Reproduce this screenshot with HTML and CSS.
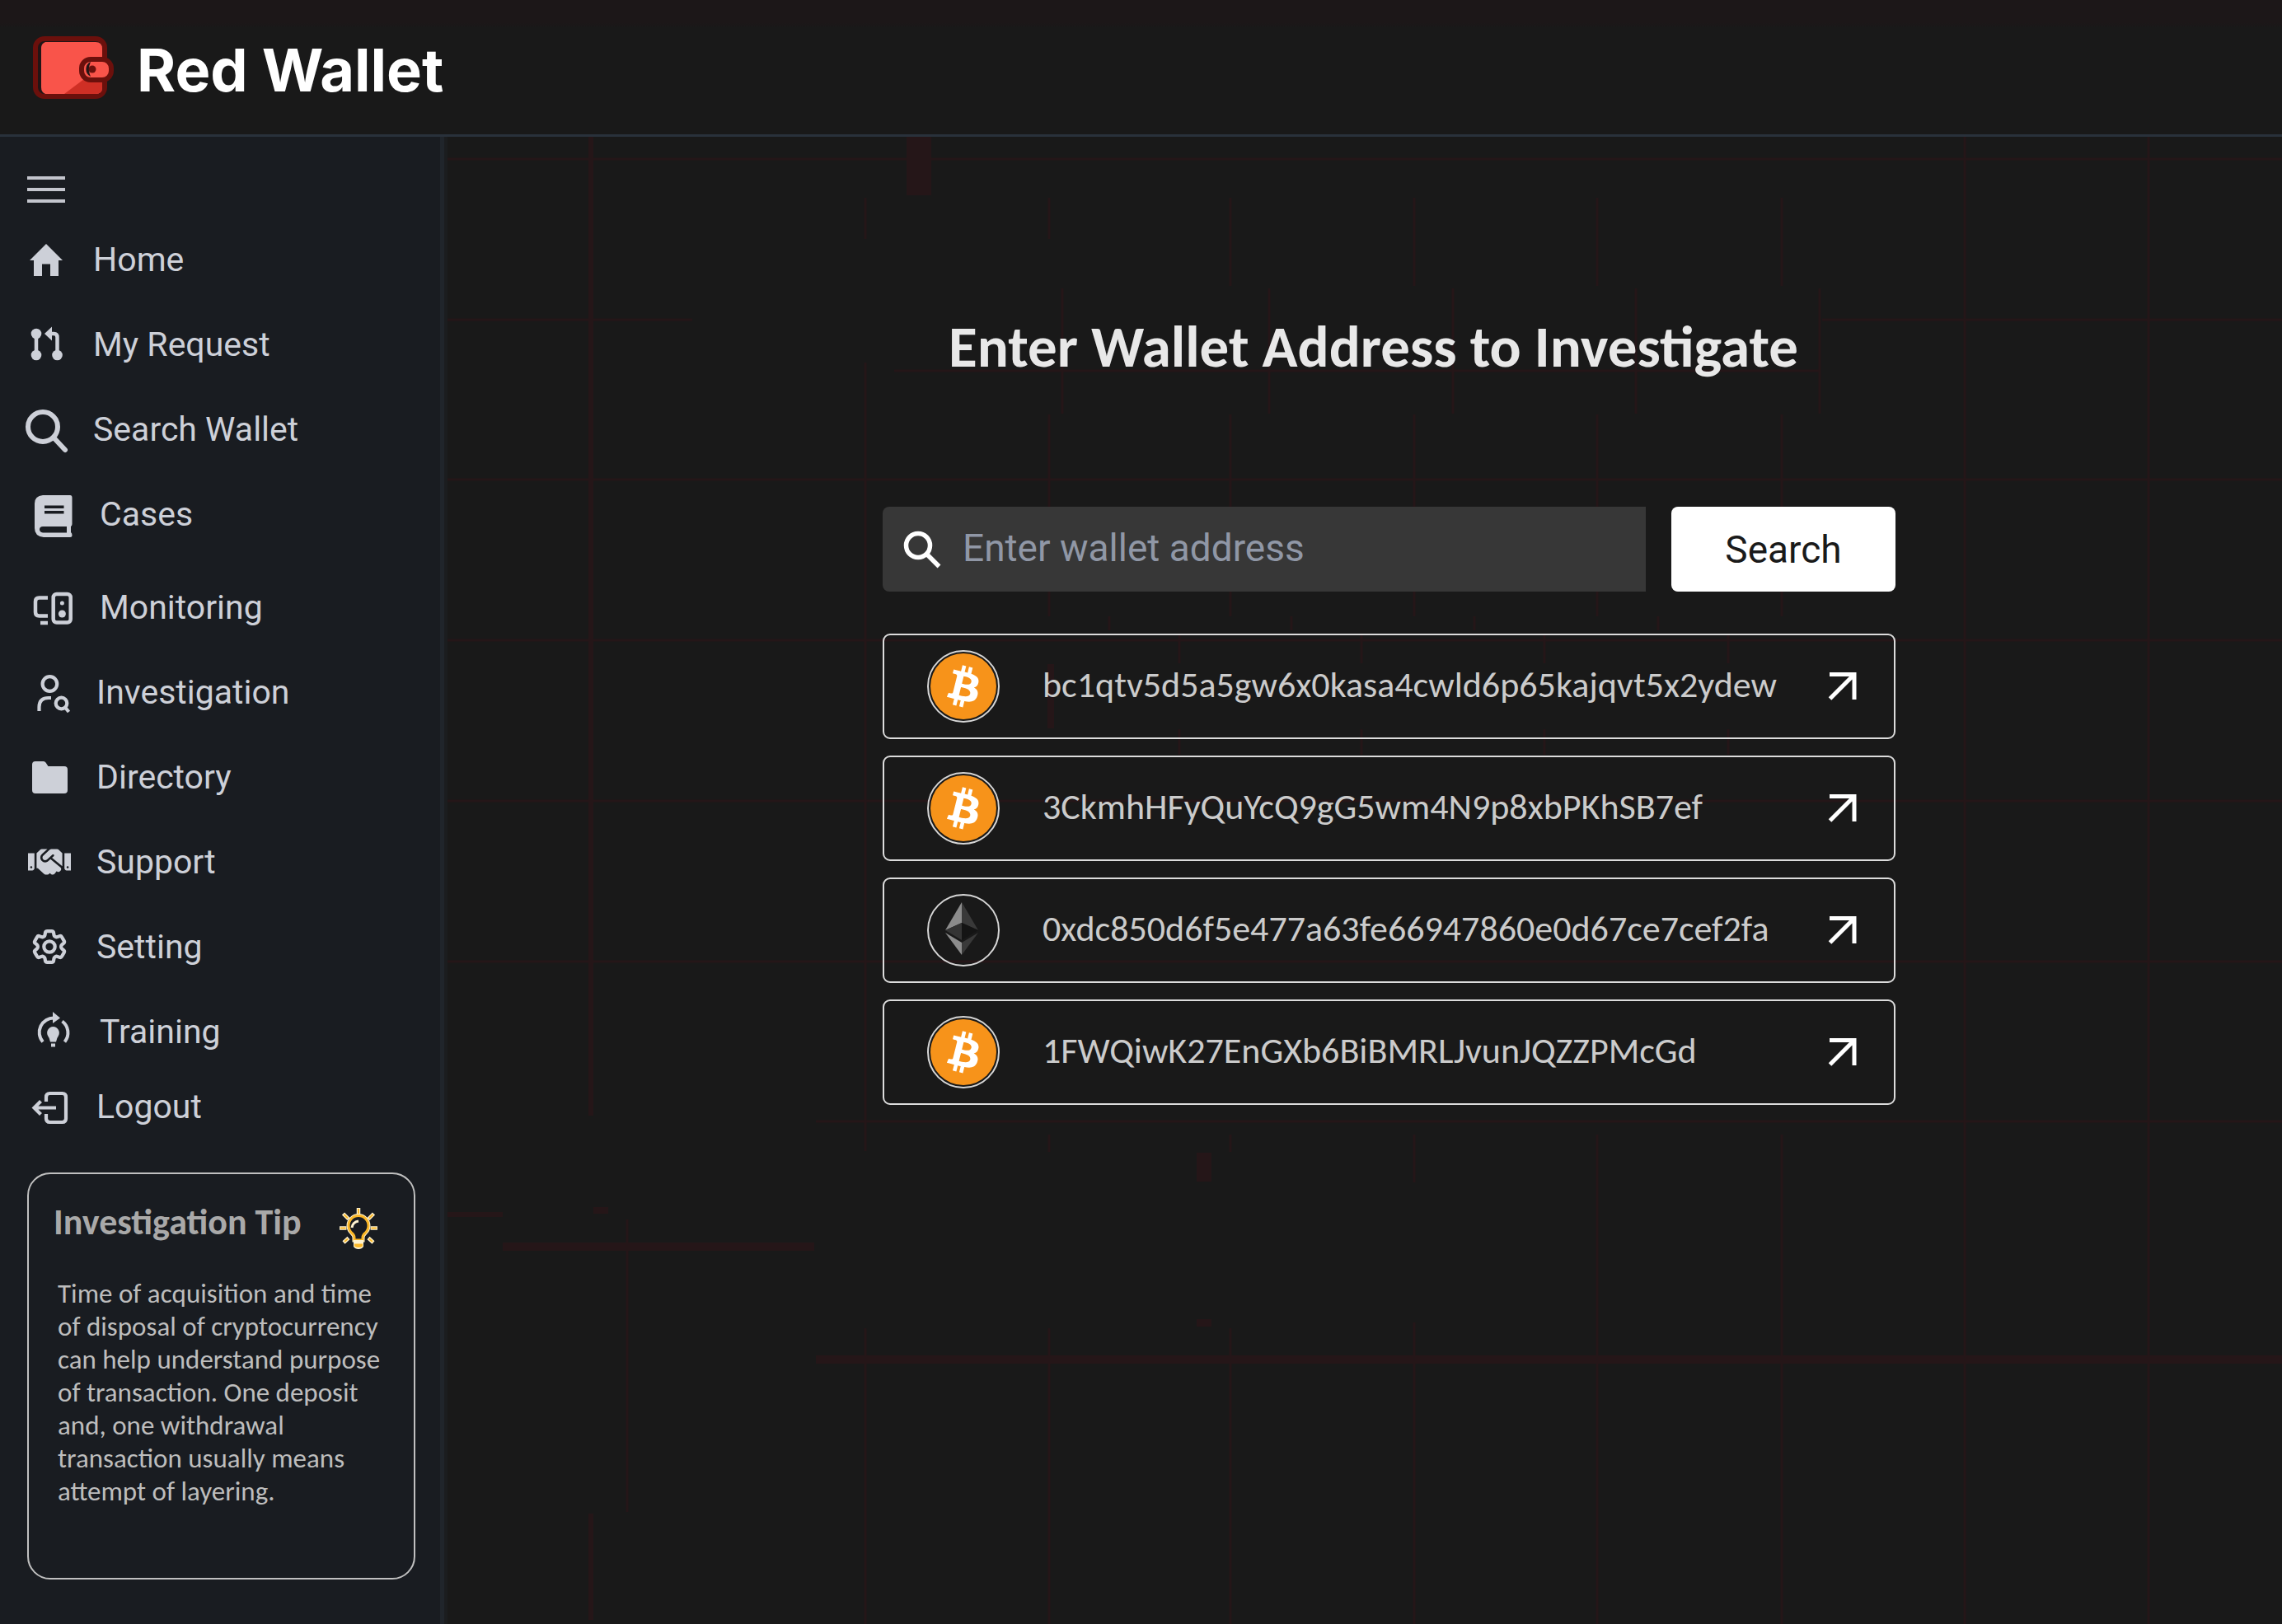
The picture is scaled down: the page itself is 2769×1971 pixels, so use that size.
FILE: index.html
```html
<!DOCTYPE html>
<html lang="en">
<head>
<meta charset="utf-8">
<title>Red Wallet</title>
<meta name="viewport" content="width=device-width, initial-scale=1">
<link rel="stylesheet" href="styles.css">
</head>
<body>
<svg width="0" height="0" class="sprite" aria-hidden="true">
  <symbol id="bitcoin" viewBox="0 0 88 88">
    <circle cx="44" cy="44" r="43" fill="none" stroke="#d6d6d6" stroke-width="2"/>
    <circle cx="44" cy="44" r="40" fill="#f7931a"/>
    <path transform="translate(3 3) scale(2.560)" fill="#fff" d="M23.189 14.020c.314-2.096-1.283-3.223-3.465-3.975l.708-2.840-1.728-.43-.69 2.765c-.454-.114-.92-.22-1.385-.326l.695-2.783L15.596 6l-.708 2.839c-.376-.086-.746-.17-1.104-.26l.002-.009-2.384-.595-.46 1.846s1.283.294 1.256.312c.7.175.826.638.805 1.006l-.806 3.235c.048.012.11.03.18.057l-.183-.045-1.130 4.532c-.086.212-.303.531-.793.41.018.025-1.256-.313-1.256-.313l-.858 1.978 2.250.561c.418.105.828.215 1.231.318l-.715 2.872 1.727.43.708-2.840c.472.127.93.245 1.378.357l-.706 2.828 1.728.43.715-2.866c2.948.558 5.164.333 6.097-2.333.752-2.146-.037-3.385-1.588-4.192 1.130-.26 1.980-1.003 2.207-2.538zm-3.950 5.538c-.533 2.147-4.148.986-5.320.695l.95-3.805c1.172.293 4.929.872 4.370 3.110zm.535-5.569c-.487 1.953-3.495.96-4.470.717l.86-3.450c.975.243 4.118.696 3.610 2.733z"/>
  </symbol>
  <symbol id="ethereum" viewBox="0 0 88 88">
    <circle cx="44" cy="44" r="43" fill="none" stroke="#d6d6d6" stroke-width="2"/>
    <path d="M42 10 22 44 42 35Z" fill="#8c8c8c"/>
    <path d="M42 10 62 44 42 35Z" fill="#393939"/>
    <path d="M22 44 42 35V56Z" fill="#343434"/>
    <path d="M62 44 42 35V56Z" fill="#141414"/>
    <path d="M22 47 42 59V74Z" fill="#8c8c8c"/>
    <path d="M62 47 42 59V74Z" fill="#393939"/>
  </symbol>
  <symbol id="arrow" viewBox="0 0 36 36">
    <path d="M2 3.500H32V34M31 4.500 2.500 33" fill="none" stroke="#fff" stroke-width="5"/>
  </symbol>
</svg>

<header class="topbar">
  <svg class="logo" viewBox="0 0 98 76" aria-hidden="true">
    <rect x="3" y="3" width="84" height="70" rx="11" fill="#211516" stroke="#6b100c" stroke-width="6"/>
    <path d="M15 7H76q8 0 8 8V62q0 8-8 8H15q-5-2-5-8V14q0-5 5-7Z" fill="#f9544a"/>
    <path d="M84 52V62q0 8-8 8H38L62 52Z" fill="#cf2f25"/>
    <rect x="59" y="28" width="36" height="25" rx="11" fill="#f9544a" stroke="#6b100c" stroke-width="6"/>
    <path d="M70 31a10 10 0 0 0 0 18q-4-9 0-18Z" fill="#211516"/>
    <circle cx="72" cy="40" r="4.500" fill="#6b100c"/>
  </svg>
  <span class="brand">Red Wallet</span>
</header>

<div class="layout">
  <aside class="sidebar">
    <button class="menu-toggle" type="button" aria-label="Toggle menu"><span></span><span></span><span></span></button>

    <nav aria-label="Main">
      <ul class="nav-group">
        <li><a class="nav-link" href="#">
          <svg class="nav-icon" viewBox="0 0 52 52"><path d="M26 7 46 27H41V46H31V31.500H21V46H11V27H6Z" fill="currentColor"/></svg>
          <span>Home</span></a></li>
        <li><a class="nav-link" href="#">
          <svg class="nav-icon" viewBox="0 0 52 52"><g fill="currentColor"><circle cx="14" cy="13" r="6.300"/><circle cx="14" cy="39" r="6.300"/><circle cx="39.500" cy="39" r="6.300"/><path d="M24 13 33 4.500V21.500Z"/></g><path d="M14 13V39M32 13H35.500Q39.500 13 39.500 17.500V39" fill="none" stroke="currentColor" stroke-width="4.500"/></svg>
          <span>My Request</span></a></li>
        <li><a class="nav-link" href="#">
          <svg class="nav-icon" viewBox="0 0 52 52"><g fill="none" stroke="currentColor" stroke-width="6" stroke-linecap="round"><circle cx="22" cy="23" r="18"/><path d="M35 36 49 51"/></g></svg>
          <span>Search Wallet</span></a></li>
        <li><a class="nav-link indent-2" href="#">
          <svg class="nav-icon" viewBox="0 0 52 52"><path fill="currentColor" fill-rule="evenodd" d="M14 3H47Q49.500 3 49.500 6V38Q49.500 40 48 41V48Q49.500 49 49.500 51.500T47 54H15Q4 53 4 43V13Q4 4 14 3ZM16 15.500V19H39.500V15.500ZM16 22V25.500H39.500V22ZM14 41Q10 41 10 44.500T14 48.500H43V41Z"/></svg>
          <span>Cases</span></a></li>
      </ul>
      <ul class="nav-group">
        <li><a class="nav-link indent-2" href="#">
          <svg class="nav-icon" viewBox="0 0 52 52"><path d="M20 14.500H9.500Q5 14.500 5 19V32Q5 36.500 9.500 36.500H20M11 45H20" fill="none" stroke="currentColor" stroke-width="4.500"/><rect x="26.700" y="10" width="21" height="34.500" rx="4" fill="none" stroke="currentColor" stroke-width="4.500"/><circle cx="37.400" cy="21" r="2.500" fill="currentColor"/><circle cx="37.400" cy="34" r="4.500" fill="currentColor"/></svg>
          <span>Monitoring</span></a></li>
        <li><a class="nav-link indent-1" href="#">
          <svg class="nav-icon" viewBox="0 0 52 52"><g fill="none" stroke="currentColor" stroke-width="4.200"><circle cx="26.400" cy="16" r="8.800"/><path d="M13.500 49V44Q13.500 33 25 33H28"/><circle cx="40.500" cy="39.500" r="6.800"/><path d="M45 44.500 49.500 50"/></g></svg>
          <span>Investigation</span></a></li>
        <li><a class="nav-link indent-1" href="#">
          <svg class="nav-icon" viewBox="0 0 52 52"><path fill="currentColor" d="M9 7H19Q20.500 7 21.500 8.500L24.500 13H44Q48 13 48 17V42Q48 46 44 46H9Q5 46 5 42V11Q5 7 9 7Z"/></svg>
          <span>Directory</span></a></li>
        <li><a class="nav-link indent-1" href="#">
          <svg class="nav-icon" viewBox="0 0 640 512"><path fill="currentColor" d="M434.700 64h-85.900c-8 0-15.700 3-21.600 8.400l-98.300 90c-.1.1-.2.3-.3.4-16.600 15.600-16.300 40.500-2.100 56 12.700 13.900 39.400 17.600 56.100 2.700.1-.1.3-.1.4-.2l79.900-73.200c6.500-5.900 16.700-5.500 22.600 1 6 6.500 5.500 16.600-1 22.600l-26.100 23.900L504 313.800c2.900 2.400 5.500 5 7.900 7.700V128l-54.600-54.600c-5.900-6-14.100-9.400-22.600-9.400zM544 128.200v223.900c0 17.700 14.300 32 32 32h64V128.200h-96zm48 223.900c-8.800 0-16-7.200-16-16s7.200-16 16-16 16 7.200 16 16-7.200 16-16 16zM0 384h64c17.700 0 32-14.300 32-32V128.200H0V384zm48-63.900c8.800 0 16 7.200 16 16s-7.200 16-16 16-16-7.200-16-16c0-8.900 7.200-16 16-16zm435.900 18.600L334.600 217.500l-30 27.500c-29.700 27.100-75.200 24.500-101.700-4.400-26.900-29.400-24.800-74.900 4.400-101.700L289.100 64h-83.800c-8.500 0-16.600 3.400-22.600 9.400L128 128v223.900h18.300l90.500 81.900c27.400 22.300 67.700 18.100 90-9.300l.2-.2 17.900 15.500c15.900 13 39.400 10.500 52.300-5.400l31.400-38.600 5.400 4.400c13.700 11.100 33.900 9.100 45-4.700l9.500-11.700c11.200-13.800 9.100-33.900-4.600-45.100z"/></svg>
          <span>Support</span></a></li>
        <li><a class="nav-link indent-1" href="#">
          <svg class="nav-icon" viewBox="-.4 -.4 24.800 24.800"><g fill="none" stroke="currentColor" stroke-width="2"><path d="M9.594 3.940c.09-.542.56-.94 1.110-.94h2.593c.55 0 1.020.398 1.110.94l.213 1.281c.063.374.313.686.645.87.074.04.147.083.22.127.325.196.72.257 1.075.124l1.217-.456a1.125 1.125 0 0 1 1.370.49l1.296 2.247a1.125 1.125 0 0 1-.26 1.431l-1.003.827c-.293.241-.438.613-.43.992a7.723 7.723 0 0 1 0 .255c-.008.378.137.75.43.991l1.004.827c.424.35.534.955.26 1.430l-1.298 2.247a1.125 1.125 0 0 1-1.369.491l-1.217-.456c-.355-.133-.75-.072-1.076.124a6.470 6.470 0 0 1-.22.128c-.331.183-.581.495-.644.869l-.213 1.281c-.09.543-.56.94-1.110.94h-2.594c-.55 0-1.019-.398-1.110-.94l-.213-1.281c-.062-.374-.312-.686-.644-.87a6.520 6.520 0 0 1-.22-.127c-.325-.196-.72-.257-1.076-.124l-1.217.456a1.125 1.125 0 0 1-1.369-.49l-1.297-2.247a1.125 1.125 0 0 1 .26-1.431l1.004-.827c.292-.24.437-.613.43-.991a6.932 6.932 0 0 1 0-.255c.007-.38-.138-.751-.43-.992l-1.004-.827a1.125 1.125 0 0 1-.26-1.430l1.297-2.247a1.125 1.125 0 0 1 1.370-.491l1.216.456c.356.133.751.072 1.076-.124.072-.044.146-.086.22-.128.332-.183.582-.495.644-.869l.214-1.280Z"/><circle cx="12" cy="12" r="3.200"/></g></svg>
          <span>Setting</span></a></li>
        <li><a class="nav-link indent-2" href="#">
          <svg class="nav-icon" viewBox="0 0 52 52"><path d="M28 9.500A17.500 17.500 0 0 0 14 38.500M37.500 13.500A17.500 17.500 0 0 1 40.500 38.500" fill="none" stroke="currentColor" stroke-width="4"/><g fill="currentColor"><path d="M26 2V16L35 9.500Z"/><path d="M26.500 20a7.500 7.500 0 0 1 6.500 11Q31 33.500 30 38.500H23Q22 33.500 20 31A7.500 7.500 0 0 1 26.500 20Z"/><rect x="24" y="40.500" width="5" height="4"/></g></svg>
          <span>Training</span></a></li>
      </ul>
      <ul class="nav-group compact">
        <li><a class="nav-link indent-1" href="#">
          <svg class="nav-icon" viewBox="0 0 52 52"><path d="M22 20V14.500Q22 10 26.500 10H41.500Q46 10 46 14.500V40.500Q46 45 41.500 45H26.500Q22 45 22 40.500V35M34 27.500H7M15.500 19.500 7.500 27.500 15.500 35.500" fill="none" stroke="currentColor" stroke-width="4.200"/></svg>
          <span>Logout</span></a></li>
      </ul>
    </nav>

    <section class="tip">
      <div class="tip-head">
        <h2>Investigation Tip</h2>
        <svg class="bulb" viewBox="0 0 46 50" aria-hidden="true">
          <g fill="none" stroke="#fff3d0" stroke-width="4.500"><path d="M23 0V8M4.500 7 11 13.500M41.500 7 35 13.500M0 24.500H8.500M46 24.500H37.500M5 42 11 36.500M41 42 35 36.500"/></g>
          <g fill="none" stroke="#fbb829" stroke-width="2"><path d="M23 1V7M5.500 8 10 12.500M40.500 8 36 12.500M1 24.500H7.500M45 24.500H38.500M6 41 10 37.500M40 41 36 37.500"/></g>
          <path d="M18 39V36Q18 33 15 30.500A12 12 0 1 1 31 30.500Q28 33 28 36V39Z" fill="none" stroke="#fff3d0" stroke-width="5"/>
          <path d="M18 39V36Q18 33 15 30.500A12 12 0 1 1 31 30.500Q28 33 28 36V39Z" fill="#191c21" stroke="#fbb829" stroke-width="3"/>
          <path d="M17 39H29V47Q27 50 23 50T17 47Z" fill="#fff3d0"/>
          <path d="M18 43.500H28V46.500Q26 48 23 48T18 46.500Z" fill="#fbb829"/>
          <path d="M15 24q1-7 8-8" fill="none" stroke="#fff3d0" stroke-width="3"/>
        </svg>
      </div>
      <p>Time of acquisition and time of disposal of cryptocurrency can help understand purpose of transaction. One deposit and, one withdrawal transaction usually means attempt of layering.</p>
    </section>
  </aside>

  <main class="main">
    <svg class="grid-lines" aria-hidden="true">
      <g transform="translate(-539 -166)" fill="none" stroke="#251618" stroke-width="3">
        <path d="M543 193H2769M543 388H840M2211 388H2769M1085 450H2208M543 582H2769M543 777H2769M543 972H2769M543 1167H2769M990 1361H2769"/>
        <path d="M1050 240V290M1050 440V1397M1050 1612V1971M1273 240V290M1273 503V748M1273 1377V1398M1273 1612V1971M1493 240V347M1493 503V748M1493 1377V1398M1493 1612V1971M1716 240V347M1716 503V748M1716 1377V1435M1716 1605V1971M1938 240V347M1938 503V748M1938 1377V1971M2162 240V347M2162 503V748M2162 1377V1971M2384 166V1971M2607 166V1971M761 1480V1835"/>
        <path d="M1289 350V502M1540 350V502M1763 350V502M1985 350V502M2208 350V502M1346 748V765M1567 748V765M1789 748V765M2012 748V765M1431 769V805M1652 769V805M1874 769V805M2097 769V805M1431 885V916M1652 885V916M1874 885V916M2097 885V916"/>
        <path d="M717 166V1354M717 1837V1966M543 1474H610" stroke-width="6"/>
        <path d="M990 1650H2769M610 1513H988" stroke-width="10"/>
        <path d="M1115 166V237" stroke-width="30"/>
        <path d="M1461 1399V1434M1461 1601V1610M729 1465V1473" stroke-width="18"/>
        <path d="M1275 806V884" stroke-width="8"/>
      </g>
    </svg>
    <div class="panel">
      <h1>Enter Wallet Address to Investigate</h1>
      <form class="search">
        <label class="search-field">
          <svg class="search-icon" viewBox="0 0 46 46" aria-hidden="true"><g fill="none" stroke="#fff" stroke-width="5.500"><circle cx="18" cy="18" r="14.500"/><path d="M28 28 43.500 43.500"/></g></svg>
          <input type="text" placeholder="Enter wallet address" aria-label="Wallet address">
        </label>
        <button class="search-button" type="submit">Search</button>
      </form>
      <ul class="wallets">
        <li><a class="wallet" href="#"><svg class="coin"><use href="#bitcoin"/></svg><span>bc1qtv5d5a5gw6x0kasa4cwld6p65kajqvt5x2ydew</span><svg class="open"><use href="#arrow"/></svg></a></li>
        <li><a class="wallet" href="#"><svg class="coin"><use href="#bitcoin"/></svg><span>3CkmhHFyQuYcQ9gG5wm4N9p8xbPKhSB7ef</span><svg class="open"><use href="#arrow"/></svg></a></li>
        <li><a class="wallet" href="#"><svg class="coin"><use href="#ethereum"/></svg><span>0xdc850d6f5e477a63fe66947860e0d67ce7cef2fa</span><svg class="open"><use href="#arrow"/></svg></a></li>
        <li><a class="wallet" href="#"><svg class="coin"><use href="#bitcoin"/></svg><span>1FWQiwK27EnGXb6BiBMRLJvunJQZZPMcGd</span><svg class="open"><use href="#arrow"/></svg></a></li>
      </ul>
    </div>
  </main>
</div>
</body>
</html>
```

FILE: styles.css
```css
* {
  box-sizing: border-box;
}

body {
  margin: 0;
  min-height: 100vh;
  display: flex;
  flex-direction: column;
  background: #191919;
  color: #cdd0d8;
  font-family: Roboto, "Liberation Sans", sans-serif;
}

ul {
  margin: 0;
  padding: 0;
  list-style: none;
}

a {
  color: inherit;
  text-decoration: none;
}

svg {
  overflow: visible;
}

.sprite {
  position: absolute;
}

/* Top bar */
.topbar {
  height: 166px;
  padding: 0 40px;
  display: flex;
  align-items: center;
  gap: 28px;
  border-bottom: 3px solid #29313b;
  background: linear-gradient(#1c1718 28px, #191919 34px);
}

.logo {
  width: 98px;
  height: 76px;
}

.brand {
  padding-top: 6px;
  color: #fff;
  font-family: Inter, Roboto, sans-serif;
  font-size: 72px;
  font-weight: 700;
  line-height: 80px;
}

.layout {
  flex: 1;
  display: flex;
}

/* Sidebar */
.sidebar {
  position: relative;
  z-index: 1;
  flex: none;
  width: 539px;
  padding: 48px 30px 40px 33px;
  border-right: 5px solid #20252b;
  box-shadow: 4px 0 #1b1d1f;
  background: #191c21;
}

.menu-toggle {
  display: flex;
  flex-direction: column;
  justify-content: space-between;
  width: 46px;
  height: 32px;
  margin-bottom: 17px;
  padding: 0;
  border: 0;
  background: none;
}

.menu-toggle span {
  height: 4px;
  width: 100%;
  background: #c3c5cd;
}

.nav-group + .nav-group {
  margin-top: 10px;
}

.nav-group + .compact {
  margin-top: 0;
}

.nav-link {
  height: 103px;
  margin-left: -3px;
  display: flex;
  align-items: center;
  gap: 31px;
  font-size: 41px;
  line-height: 48px;
}

.compact .nav-link {
  height: 80px;
}

.indent-1 {
  padding-left: 4px;
}

.indent-2 {
  padding-left: 8px;
}

.nav-icon {
  flex: none;
  width: 52px;
  height: 52px;
}

.tip {
  height: 494px;
  margin-top: 40px;
  padding: 34px 34px 34px 30px;
  border: 2px solid #c0c0c0;
  border-radius: 28px;
  font-family: Carlito, Lato, sans-serif;
}

.tip-head {
  display: flex;
  justify-content: space-between;
  padding-right: 10px;
}

.tip h2 {
  margin: 0;
  color: #a9a9a9;
  font-size: 44px;
  line-height: 48px;
}

.bulb {
  width: 46px;
  height: 50px;
  margin-top: 7px;
}

.tip p {
  margin: 34px 0 0 5px;
  color: #bdbdbd;
  font-size: 33px;
  line-height: 40px;
}

/* Main area */
.main {
  position: relative;
  flex: 1;
  padding-left: 63px;
  display: flex;
  justify-content: center;
  align-items: flex-start;
}

.grid-lines {
  position: absolute;
  inset: 0;
  width: 100%;
  height: 100%;
  overflow: hidden;
}

.panel {
  position: relative;
  width: 100%;
  max-width: 1229px;
  padding-top: 215px;
}

h1 {
  margin: 0 0 154px;
  padding-right: 38px;
  color: #e8e8e8;
  font-family: Carlito, Lato, sans-serif;
  font-size: 71px;
  line-height: 80px;
  text-align: center;
}

.search {
  display: flex;
  gap: 31px;
}

.search-field {
  flex: 1;
  height: 103px;
  padding: 0 25px;
  display: flex;
  align-items: center;
  gap: 26px;
  border-radius: 8px 0 0 8px;
  background: #373737;
}

.search-icon {
  flex: none;
  width: 46px;
  height: 46px;
}

.search-field input {
  flex: 1;
  min-width: 0;
  padding: 0 0 4px;
  border: 0;
  outline: 0;
  background: none;
  color: #fff;
  font: 46px Roboto, sans-serif;
}

.search-field input::placeholder {
  color: #9097a6;
}

.search-button {
  width: 272px;
  padding: 0;
  border: 0;
  border-radius: 8px;
  background: #fff;
  color: #1a1a1a;
  font: 46px Roboto, sans-serif;
}

.wallets {
  display: grid;
  gap: 20px;
  margin-top: 51px;
}

.wallet {
  height: 128px;
  padding: 0 44px 0 52px;
  display: flex;
  align-items: center;
  border: 2px solid #dcdcdc;
  border-radius: 9px;
  color: #cbcbcb;
  font-family: Carlito, Lato, sans-serif;
  font-size: 44px;
  line-height: 48px;
}

.wallet span {
  padding-bottom: 4px;
}

.coin {
  width: 88px;
  height: 88px;
  margin-right: 52px;
}

.open {
  width: 36px;
  height: 36px;
  margin-left: auto;
}
```
